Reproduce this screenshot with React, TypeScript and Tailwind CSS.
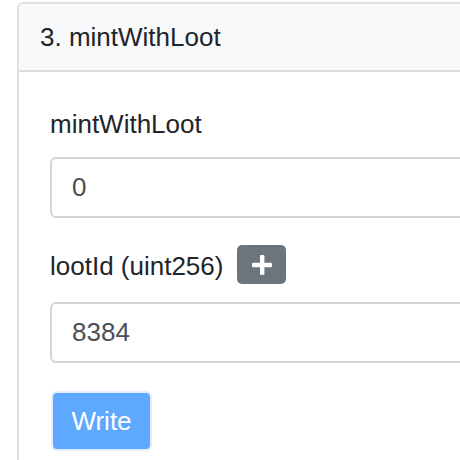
import React from "react";

export default function App() {
  return (
    <div
      className="w-[460px] h-[460px] overflow-hidden bg-white pt-[2px] pl-[17px]"
      style={{ fontFamily: '"Liberation Sans", Arial, Helvetica, sans-serif' }}
    >
      <div className="w-[520px] border-2 border-[#dfdfdf] rounded-tl-[6px] rounded-bl-[6px] bg-white">
        <div className="h-[68px] flex items-center pl-[21px] bg-[#f8f9fa] border-b-2 border-[#dcdcdc] rounded-tl-[5px] text-[26px] text-[#212529]">
          3. mintWithLoot
        </div>
        <div className="pl-[31px] pt-[33px] pb-[12px]">
          <div className="text-[26px] leading-[39px] text-[#212529]">mintWithLoot</div>
          <div className="mt-[13px] h-[61px] w-[460px] border-2 border-[#d2d6da] rounded-[6px] flex items-center pl-[20px] text-[26px] text-[#495057]">
            0
          </div>
          <div className="mt-[27px] h-[39px] flex items-center">
            <span className="text-[26px] leading-[39px] text-[#212529] pt-[4px]">lootId (uint256)</span>
            <span className="ml-[14px] w-[49px] h-[39px] rounded-[5px] bg-[#6c757d] flex items-center justify-center">
              <svg width="20" height="20" viewBox="0 0 20 20">
                <rect x="8" y="0" width="4.4" height="20" rx="1.2" fill="#ffffff" />
                <rect x="0" y="7.8" width="20" height="4.4" rx="1.2" fill="#ffffff" />
              </svg>
            </span>
          </div>
          <div className="mt-[18px] h-[61px] w-[460px] border-2 border-[#d2d6da] rounded-[6px] flex items-center pl-[20px] text-[26px] text-[#495057]">
            8384
          </div>
          <button className="mt-[28px] ml-[1px] h-[60px] w-[101px] rounded-[6px] bg-[#5ea8ff] border-2 border-[#e3efff] text-white text-[26px] flex items-center justify-center">
            Write
          </button>
        </div>
      </div>
    </div>
  );
}
